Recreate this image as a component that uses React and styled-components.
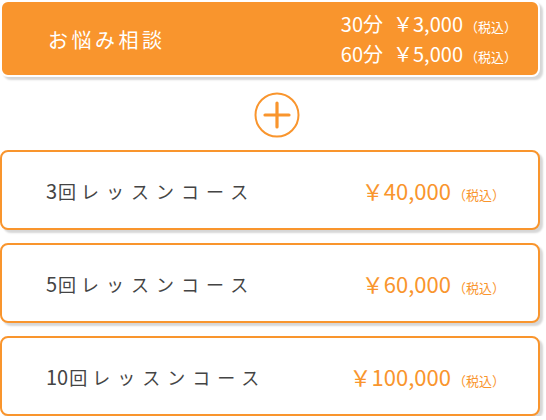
import React from "react";
import styled, { createGlobalStyle } from "styled-components";

const ORANGE = "#f9952d";

const Global = createGlobalStyle`
  html, body { margin: 0; padding: 0; background: #fff; }
  body { font-family: "Noto Sans CJK JP", "Noto Sans", sans-serif; }
`;

const Page = styled.div`
  width: 540px;
  display: flex;
  flex-direction: column;
`;

const Consult = styled.div`
  box-sizing: border-box;
  height: 77px;
  background: ${ORANGE};
  border: 2px solid #fff;
  border-radius: 8px;
  box-shadow: 3px 3px 2px rgba(0, 0, 0, 0.16);
  display: flex;
  align-items: center;
  justify-content: space-between;
  padding: 0 21px 0 46px;
  color: #fff;
`;

const ConsultTitle = styled.div`
  font-size: 20px;
  letter-spacing: 3.5px;
  padding-top: 1px;
`;

const PriceList = styled.div`
  display: flex;
  flex-direction: column;
  align-items: flex-end;
`;

const PriceLine = styled.div`
  font-size: 20px;
  line-height: 30px;
  height: 30px;
  white-space: nowrap;
`;

const Yen = styled.span`
  margin-left: ${(p) => p.$lead}px;
`;

const Tax = styled.span`
  font-size: 13px;
  margin-left: 2px;
`;

const PlusRow = styled.div`
  height: 73px;
  display: flex;
  align-items: center;
  justify-content: center;
  padding-left: 14px;
  padding-top: 3px;
  box-sizing: border-box;
`;

const Cards = styled.div`
  display: flex;
  flex-direction: column;
  gap: 13px;
`;

const Card = styled.div`
  box-sizing: border-box;
  height: 80px;
  border: 2px solid ${ORANGE};
  border-radius: 8px;
  background: #fff;
  box-shadow: 3px 3px 2px rgba(0, 0, 0, 0.16);
  display: flex;
  align-items: center;
  justify-content: space-between;
  padding: 0 33px 0 44px;
`;

const CourseName = styled.div`
  font-size: 18px;
  color: #444;
  white-space: nowrap;
`;

const Count = styled.span`
  font-size: 20px;
  margin-right: 1px;
`;

const Kai = styled.span`
  margin-right: 5px;
`;

const Katakana = styled.span`
  letter-spacing: 7px;
`;

const CoursePrice = styled.div`
  font-size: 22px;
  color: ${ORANGE};
  white-space: nowrap;
`;

const Plus = () => (
  <svg width="46" height="46" viewBox="0 0 46 46">
    <circle cx="23" cy="23" r="21.5" fill="none" stroke={ORANGE} strokeWidth="2" />
    <path d="M11 23 H35 M23 11 V35" stroke={ORANGE} strokeWidth="3.2" strokeLinecap="round" />
  </svg>
);

const courses = [
  { count: "3", price: "40,000" },
  { count: "5", price: "60,000" },
  { count: "10", price: "100,000" },
];

export default function App() {
  return (
    <>
      <Global />
      <Page>
        <Consult>
          <ConsultTitle>お悩み相談</ConsultTitle>
          <PriceList>
            <PriceLine>
              30分<Yen $lead={10}>￥</Yen>3,000<Tax>（税込）</Tax>
            </PriceLine>
            <PriceLine>
              60分<Yen $lead={10}>￥</Yen>5,000<Tax>（税込）</Tax>
            </PriceLine>
          </PriceList>
        </Consult>
        <PlusRow>
          <Plus />
        </PlusRow>
        <Cards>
          {courses.map((c) => (
            <Card key={c.count}>
              <CourseName>
                <Count>{c.count}</Count>
                <Kai>回</Kai>
                <Katakana>レッスンコース</Katakana>
              </CourseName>
              <CoursePrice>
                <Yen $lead={0}>￥</Yen>
                {c.price}
                <Tax>（税込）</Tax>
              </CoursePrice>
            </Card>
          ))}
        </Cards>
      </Page>
    </>
  );
}
